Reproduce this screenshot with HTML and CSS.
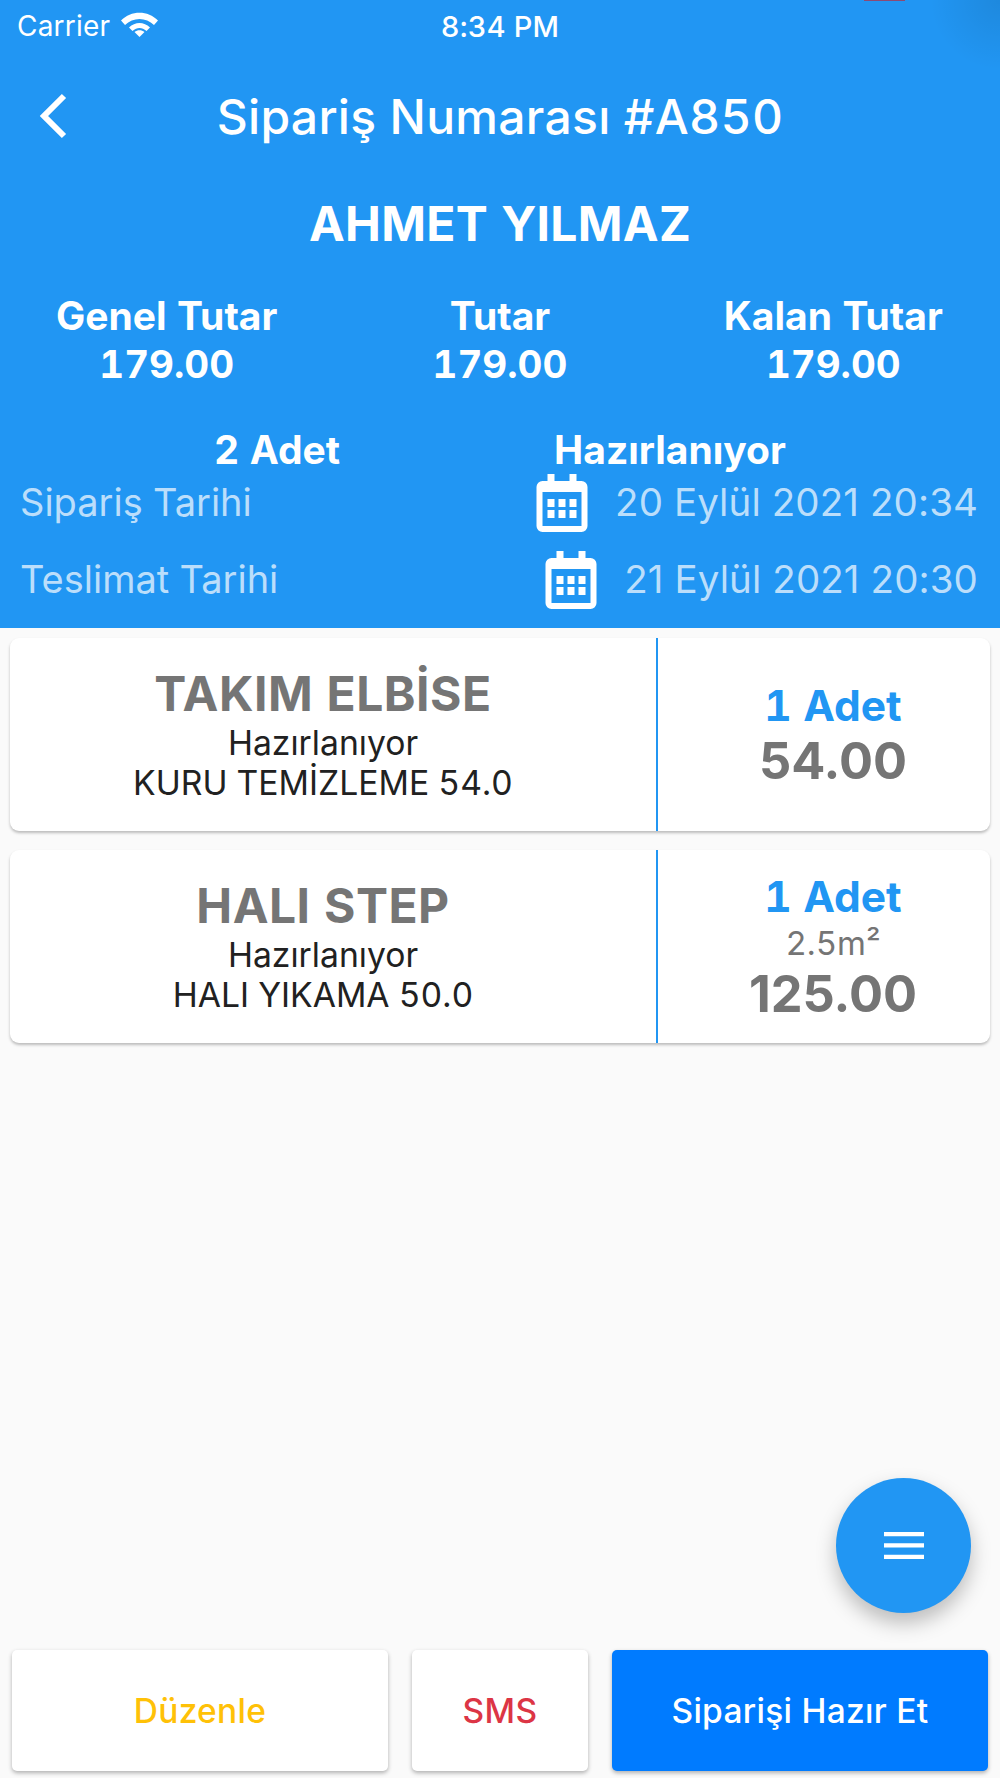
FILE: index.html
```html
<!DOCTYPE html>
<html lang="en">
<head>
    <meta charset="UTF-8">
    <meta name="viewport" content="width=device-width, initial-scale=1.0">
    <title>Sipariş Numarası #A850</title>
    <link rel="stylesheet" href="styles.css">
</head>

<body>
    <div class="page">
        <div class="header">
            <div class="corner-strip"></div>
            <div class="status">
                <div class="status-left">
                    <span>Carrier</span>
                    <svg class="wifi" viewBox="0 0 37 27">
                        <path d="M0 10.5C10 0 27 0 37 10.5L33 15C25 7 12 7 4 15Z" fill="#fff"/>
                        <path d="M8 18.5C14 12.500 23 12.500 29 18.500L25.500 22C21 18 16 18 11.500 22Z" fill="#fff" transform="translate(0 -1)"/>
                        <path d="M13.500 22C16.500 19.500 20.500 19.500 23.500 22L18.500 27Z" fill="#fff"/>
                    </svg>
                </div>
                <span class="status-time">8:34 PM</span>
            </div>
            <div class="topbar">
                <svg class="back" viewBox="0 0 28 46">
                    <path d="M25 3L5 23L25 43" fill="none" stroke="#fff" stroke-width="6"/>
                </svg>
                <h1 class="title">Sipariş Numarası #A850</h1>
            </div>
            <h2 class="customer">AHMET YILMAZ</h2>
            <div class="totals">
                <div class="total"><p>Genel Tutar</p><p class="total-num">179.00</p></div>
                <div class="total"><p>Tutar</p><p class="total-num">179.00</p></div>
                <div class="total"><p>Kalan Tutar</p><p class="total-num">179.00</p></div>
            </div>
            <div class="summary">
                <span>2 Adet</span>
                <span>Hazırlanıyor</span>
            </div>
            <div class="date-row first">
                <span class="date-label">Sipariş Tarihi</span>
                <div class="date">
                    <svg class="cal" viewBox="0 0 51 58">
                        <path fill-rule="evenodd" fill="#fff" d="M11 0h7v7h15V0h7v7h5a6 6 0 0 1 6 6v39a6 6 0 0 1-6 6H6a6 6 0 0 1-6-6V13a6 6 0 0 1 6-6h5ZM6 18v34h39V18Z"/>
                        <path fill="#fff" d="M11 25h7v8h-7zM22 25h7v8h-7zM33 25h7v8h-7zM11 36h7v8h-7zM22 36h7v8h-7zM33 36h7v8h-7z"/>
                    </svg>
                    <span class="date-text">20 Eylül 2021 20:34</span>
                </div>
            </div>
            <div class="date-row">
                <span class="date-label">Teslimat Tarihi</span>
                <div class="date">
                    <svg class="cal" viewBox="0 0 51 58">
                        <path fill-rule="evenodd" fill="#fff" d="M11 0h7v7h15V0h7v7h5a6 6 0 0 1 6 6v39a6 6 0 0 1-6 6H6a6 6 0 0 1-6-6V13a6 6 0 0 1 6-6h5ZM6 18v34h39V18Z"/>
                        <path fill="#fff" d="M11 25h7v8h-7zM22 25h7v8h-7zM33 25h7v8h-7zM11 36h7v8h-7zM22 36h7v8h-7zM33 36h7v8h-7z"/>
                    </svg>
                    <span class="date-text">21 Eylül 2021 20:30</span>
                </div>
            </div>
        </div>

        <div class="list">
            <div class="card">
                <div class="card-left">
                    <p class="item-name">TAKIM ELBİSE</p>
                    <p class="item-text">Hazırlanıyor</p>
                    <p class="item-text">KURU TEMİZLEME 54.0</p>
                </div>
                <div class="card-right">
                    <p class="qty">1 Adet</p>
                    <p class="price">54.00</p>
                </div>
            </div>
            <div class="card">
                <div class="card-left">
                    <p class="item-name">HALI STEP</p>
                    <p class="item-text">Hazırlanıyor</p>
                    <p class="item-text">HALI YIKAMA 50.0</p>
                </div>
                <div class="card-right">
                    <p class="qty">1 Adet</p>
                    <p class="area">2.5m²</p>
                    <p class="price">125.00</p>
                </div>
            </div>
        </div>

        <div class="actions">
            <button class="btn edit">Düzenle</button>
            <button class="btn sms">SMS</button>
            <button class="btn ready">Siparişi Hazır Et</button>
        </div>

        <div class="fab">
            <svg viewBox="0 0 40 27" class="menu">
                <path d="M0 0h40v4.300H0zM0 11.300h40v4.300H0zM0 22.700h40V27H0z" fill="#fff"/>
            </svg>
        </div>
    </div>
</body>
</html>
```

FILE: styles.css
```css
*{
    box-sizing: border-box;
}
body{
    margin: 0;
    font-family: Inter, "Noto Sans", sans-serif;
    font-variant-numeric: tabular-nums;
}
p,h1,h2{
    margin: 0;
}
.page{
    position: relative;
    width: 1000px;
    height: 1778px;
    background-color: #fafafa;
    display: flex;
    flex-direction: column;
    overflow: hidden;
}
.header{
    height: 628px;
    flex-shrink: 0;
    background: radial-gradient(circle at top right, rgba(0,0,0,0.09), rgba(0,0,0,0) 70px), #2196f3;
    color: white;
}
.corner-strip{
    position: absolute;
    top: 0;
    left: 864px;
    width: 41px;
    height: 1px;
    background-color: #8b4a74;
}
.status{
    position: relative;
    height: 52px;
    padding-left: 17px;
    display: flex;
    align-items: center;
    font-size: 28px;
    letter-spacing: 0.2px;
}
.status-left{
    display: flex;
    align-items: center;
    gap: 11px;
}
.wifi{
    width: 37px;
    height: 27px;
    margin-top: -5px;
}
.status-time{
    position: absolute;
    left: 0;
    right: 0;
    text-align: center;
    font-size: 29px;
    font-weight: 500;
}
.topbar{
    position: relative;
    height: 72px;
    margin-top: 28px;
    display: flex;
    align-items: center;
    justify-content: center;
}
.back{
    position: absolute;
    left: 39px;
    top: 13px;
    width: 28px;
    height: 46px;
}
.title{
    font-size: 48px;
    font-weight: 500;
    letter-spacing: 0.3px;
}
.customer{
    margin-top: 43px;
    text-align: center;
    font-size: 48px;
    line-height: 58px;
    font-weight: 700;
    letter-spacing: 0.3px;
}
.totals{
    margin-top: 39px;
    display: grid;
    grid-template-columns: repeat(3,1fr);
    text-align: center;
    font-size: 39px;
    line-height: 48px;
    font-weight: 700;
}
.total-num{
    font-size: 38.5px;
}
.summary{
    margin-top: 38px;
    display: flex;
    justify-content: space-evenly;
    font-size: 39px;
    line-height: 48px;
    font-weight: 700;
}
.date-row{
    display: flex;
    justify-content: space-between;
    align-items: center;
    padding: 0 22px 0 20px;
    height: 58px;
    margin-top: 19px;
    font-size: 38px;
    color: #bbdefb;
}
.date-row.first{
    margin-top: 0;
}
.date-label,.date-text{
    padding-bottom: 3px;
}
.date{
    display: flex;
    align-items: center;
    gap: 27px;
}
.date-text{
    font-size: 38.5px;
    letter-spacing: 0.1px;
    font-variant-numeric: normal;
}
.cal{
    width: 52px;
    height: 58px;
}
.list{
    padding: 10px 10px 0;
    display: flex;
    flex-direction: column;
    gap: 19px;
}
.card{
    height: 193px;
    background-color: white;
    border-radius: 9px;
    box-shadow: 0 2px 3px rgba(0,0,0,0.25);
    display: flex;
}
.card-left{
    width: 648px;
    border-right: 2px solid #2196f3;
    display: flex;
    flex-direction: column;
    align-items: center;
    justify-content: center;
    padding-bottom: 2px;
    padding-right: 20px;
    color: #212121;
    font-size: 33.7px;
    line-height: 40px;
}
.card-right{
    flex: 1;
    display: flex;
    flex-direction: column;
    align-items: center;
    justify-content: center;
    padding-top: 1px;
    padding-left: 18px;
}
.item-name{
    font-size: 48px;
    line-height: 58px;
    font-weight: 700;
    letter-spacing: 0.5px;
    color: #757575;
}
.qty{
    font-size: 42.5px;
    line-height: 52px;
    font-weight: 700;
    color: #2196f3;
}
.area{
    font-size: 33px;
    line-height: 40px;
    margin-bottom: 2px;
    color: #757575;
}
.price{
    font-size: 50.5px;
    line-height: 58px;
    font-weight: 700;
    font-variant-numeric: normal;
    color: #757575;
}
.actions{
    margin-top: auto;
    padding: 0 12px 7px;
    display: flex;
    gap: 24px;
}
.btn{
    height: 121px;
    border: 0;
    border-radius: 5px;
    background-color: white;
    box-shadow: 0 2px 4px rgba(0,0,0,0.3);
    font-family: Inter, "Noto Sans", sans-serif;
    font-size: 33.5px;
    font-weight: 500;
    letter-spacing: 0.3px;
}
.edit{
    width: 376px;
    color: #ffc107;
}
.sms{
    width: 176px;
    color: #dc3545;
}
.ready{
    width: 376px;
    color: white;
    background-color: #007bff;
}
.fab{
    position: absolute;
    left: 836px;
    top: 1478px;
    width: 135px;
    height: 135px;
    border-radius: 50%;
    background-color: #2196f3;
    box-shadow: 0 10px 20px rgba(0,0,0,0.25);
    display: flex;
    align-items: center;
    justify-content: center;
}
.menu{
    width: 40px;
    height: 27px;
}
```
